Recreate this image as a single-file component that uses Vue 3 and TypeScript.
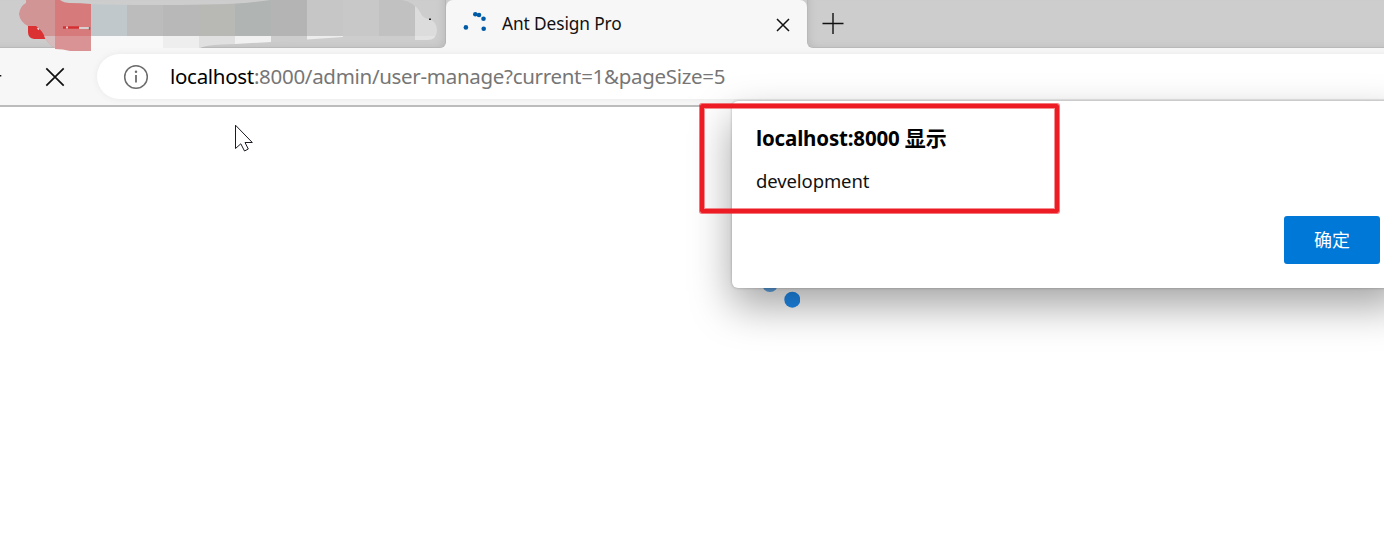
<script setup lang="ts">
interface Tile { x: number; top: string; bottom: string }

const tiles: Tile[] = [
  { x: 91, top: '#c0c8cb', bottom: '#f8f8f8' },
  { x: 127, top: '#bcbcbc', bottom: '#f8f8f8' },
  { x: 163, top: '#b8b8b8', bottom: '#eeeeee' },
  { x: 199, top: '#b8b8b5', bottom: '#e0e0e0' },
  { x: 235, top: '#b0b4b3', bottom: '#f1f1f1' },
  { x: 271, top: '#b4b4b4', bottom: '#cdcdcd' },
  { x: 307, top: '#c6c6c6', bottom: '#ededed' },
  { x: 343, top: '#c8c8c8', bottom: '#cdcdcd' },
  { x: 379, top: '#c1c1c1', bottom: '#cdcdcd' },
  { x: 415, top: '#dcdcdc', bottom: '#e3e3e3' },
]
const address = { host: 'localhost', rest: ':8000/admin/user-manage?current=1&pageSize=5' }
</script>

<template>
  <div class="window">
    <header class="tabstrip">
      <div class="old-tab">
        <svg width="446" height="52" viewBox="0 0 446 52">
          <defs>
            <clipPath id="smear">
              <path d="M91 4 Q115 5 150 5 Q215 5 245 3 L271 0 H402 Q414 2 420 12 Q423 19 429 19 Q437 22 437 30 Q437 40 427 40 H415 Q390 36 360 36 L343 37 L307 39.5 L271 42 L235 44 L222 44.5 Q205 45 200 48 H91 Z" />
            </clipPath>
          </defs>
          <g clip-path="url(#smear)">
            <template v-for="t in tiles" :key="t.x">
              <rect :x="t.x" y="0" width="36" height="36" :fill="t.top" shape-rendering="crispEdges" />
              <rect :x="t.x" y="36" width="36" height="14" :fill="t.bottom" shape-rendering="crispEdges" />
            </template>
          </g>
          <path d="M28 25 H45 V39 H34 Q28 38 28 32 Z" fill="#dc3133" />
          <path d="M26 0 H55 V48 Q49 45 45 38 Q43 31 36 26 H28 Q20 22 19 14 Q20 6 26 3 Z" fill="#d19596" />
          <path d="M44.4 36 H55 V48 Q49 45 45 38 Z" fill="#d6bcbd" />
          <path d="M55 0 H60 Q64 3 70 3 Q81 3 91 4 V36 H55 Z" fill="#d77a7b" />
          <path d="M55 36 H91 V51 H70 Q63 49 55 49 Z" fill="#da9394" />
          <path d="M63 27.5 H79" stroke="#d52f31" stroke-width="2.4" />
          <path d="M66 27.5 H68 M79 28 H89" stroke="#d8d0d0" stroke-width="2.2" />
          <path d="M89.5 27 V30" stroke="#557a78" stroke-width="1.3" />
          <path d="M37.5 28.3 L39 29.5" stroke="#f3eef6" stroke-width="1.4" />
          <rect x="429" y="18.5" width="2" height="1.5" fill="#222" />
        </svg>
      </div>
      <div class="active-tab">
        <svg class="favicon" width="24" height="24" viewBox="0 0 24 24" fill="#005ba6">
          <circle cx="12.3" cy="4.3" r="2.3" /><circle cx="16" cy="5" r="2.3" />
          <circle cx="20.5" cy="8.8" r="2.3" /><circle cx="20.7" cy="18.7" r="2.3" />
          <circle cx="2.9" cy="17.4" r="2.3" />
        </svg>
        <span class="tab-title">Ant Design Pro</span>
        <svg class="tab-close" width="14" height="14" viewBox="0 0 14 14"><path d="M1 1 L13 13 M13 1 L1 13" stroke="#111" stroke-width="1.5" /></svg>
      </div>
      <div class="tab-space">
        <svg width="22" height="22" viewBox="0 0 22 22"><path d="M0.5 10.5 H21.5 M11 0 V21" stroke="#111" stroke-width="1.4" /></svg>
      </div>
    </header>

    <div class="toolbar">
      <svg class="forward-tip" width="2" height="3"><rect y="1" width="1.3" height="1.5" fill="#111" /></svg>
      <svg class="stop" width="20" height="20" viewBox="0 0 20 20"><path d="M1.3 1.3 L18.7 18.7 M18.7 1.3 L1.3 18.7" stroke="#111" stroke-width="1.7" /></svg>
      <div class="address">
        <svg width="26" height="26" viewBox="0 0 26 26">
          <circle cx="13" cy="13" r="11.3" fill="none" stroke="#6c6c6c" stroke-width="1.5" />
          <path d="M13 11 V18.5" stroke="#6c6c6c" stroke-width="1.8" />
          <circle cx="13" cy="7.8" r="1.25" fill="#6c6c6c" />
        </svg>
        <span class="url"><span class="host">{{ address.host }}</span>{{ address.rest }}</span>
      </div>
    </div>

    <main class="page">
      <svg class="spinner" width="50" height="40" viewBox="0 0 50 40">
        <circle cx="20" cy="14" r="8" fill="#62a9ea" /><circle cx="42.3" cy="29.7" r="8" fill="#1f8cf0" />
      </svg>
      <svg class="cursor" width="20" height="30" viewBox="0 0 20 30">
        <path d="M1.5 1.2 V24.5 L6.8 19.8 L10.5 27 L14.3 25 L11 18.5 H18.3 Z" fill="#fff" stroke="#1c1924" stroke-width="1" />
      </svg>
    </main>

    <section class="dialog">
      <h1>localhost:8000 <span class="verb">显示</span></h1>
      <p>development</p>
      <div class="actions"><button type="button">确定</button></div>
    </section>
    <div class="highlight"></div>
  </div>
</template>

<style>
body { margin: 0; overflow: hidden; }
</style>

<style scoped>
.window {
  position: relative;
  display: flex;
  flex-direction: column;
  width: 1384px;
  height: 542px;
  overflow: hidden;
  background: #fff;
  font-family: "Noto Sans", "Noto Sans CJK SC", sans-serif;
}
svg { flex: none; }
.tabstrip { display: flex; height: 48px; flex: none; background: #f7f7f7; }
.old-tab {
  position: relative;
  z-index: 1;
  width: 446px;
  height: 48px;
  box-sizing: border-box;
  background: #cdcdcd;
  border-right: 1px solid #b5b5b5;
  border-bottom: 1px solid #b9b9b9;
  border-radius: 0 0 6px 0;
  box-shadow: inset -5px -3px 6px -3px #bdbdbd;
}
.old-tab svg { display: block; }
.active-tab {
  display: flex;
  align-items: center;
  width: 361px;
  background: linear-gradient(#cdcdcd 0 8px, #f7f7f7 8px);
  position: relative;
}
.active-tab::before {
  content: "";
  position: absolute;
  inset: 0;
  background: #f7f7f7;
  border-radius: 7px 7px 0 0;
}
.active-tab > * { position: relative; }
.favicon { margin: -5px 0 0 17px; }
.tab-title { margin-left: 15px; flex: 1; font-size: 17.3px; line-height: 48px; letter-spacing: -0.1px; color: #111; white-space: nowrap; }
.tab-close { margin: 1px 17px 0 0; }
.tab-space {
  flex: 1;
  box-sizing: border-box;
  padding: 13px 0 0 14px;
  background: #cdcdcd;
  border-left: 1px solid #b9b9b9;
  border-bottom: 1px solid #b9b9b9;
  border-radius: 0 0 0 6px;
  box-shadow: inset 5px -3px 6px -3px #bdbdbd;
}
.toolbar {
  display: flex;
  align-items: center;
  box-sizing: border-box;
  height: 59px;
  flex: none;
  overflow: hidden;
  background: #f7f7f7;
  border-bottom: 2px solid #bcbcbc;
}
.forward-tip { margin-top: -3px; }
.stop { margin-left: 43px; }
.address {
  display: flex;
  align-items: center;
  box-sizing: border-box;
  width: 1320px;
  height: 45px;
  margin-left: 32px;
  padding-left: 26px;
  flex: none;
  background: #fff;
  border-radius: 23px;
  box-shadow: 0 0 6px #e8e8e8;
}
.url { margin: -2px 0 0 21px; color: #767676; font-size: 20.5px; line-height: 44px; letter-spacing: -0.3px; white-space: nowrap; }
.host { color: #000; }
.page { position: relative; flex: 1; background: #fff; }
.spinner { position: absolute; left: 750px; top: 163px; }
.cursor { position: absolute; left: 234px; top: 17px; }
.dialog {
  position: absolute;
  left: 732px;
  top: 101px;
  display: flex;
  flex-direction: column;
  box-sizing: border-box;
  width: 672px;
  height: 187px;
  padding: 23px 24px 24px;
  background: #fff;
  border-radius: 6px;
  box-shadow: 0 0 3px rgba(0, 0, 0, .28), 0 18px 42px rgba(0, 0, 0, .36);
}
h1 { margin: 0; font-size: 20.5px; line-height: 28px; font-weight: 700; letter-spacing: -0.16px; color: #000; white-space: nowrap; }
.verb { font-size: 21px; letter-spacing: 0; }
p { margin: 15px 0 0; font-size: 18.5px; line-height: 28px; letter-spacing: -0.1px; color: #111; }
.actions { display: flex; justify-content: flex-end; margin-top: auto; }
button {
  width: 96px;
  height: 48px;
  padding: 0 0 3px;
  border: 0;
  border-radius: 3px;
  background: #0078d7;
  color: #fff;
  font-family: "Noto Sans CJK SC", sans-serif;
  font-size: 18px;
  font-weight: 400;
}
.highlight {
  position: absolute;
  left: 700px;
  top: 104px;
  box-sizing: border-box;
  width: 359px;
  height: 109px;
  border: 4px solid #ed1c24;
  border-radius: 2px;
  box-shadow: 0 0 0 1px rgba(237, 28, 36, .6), inset 0 0 0 1px rgba(237, 28, 36, .5);
}
</style>
